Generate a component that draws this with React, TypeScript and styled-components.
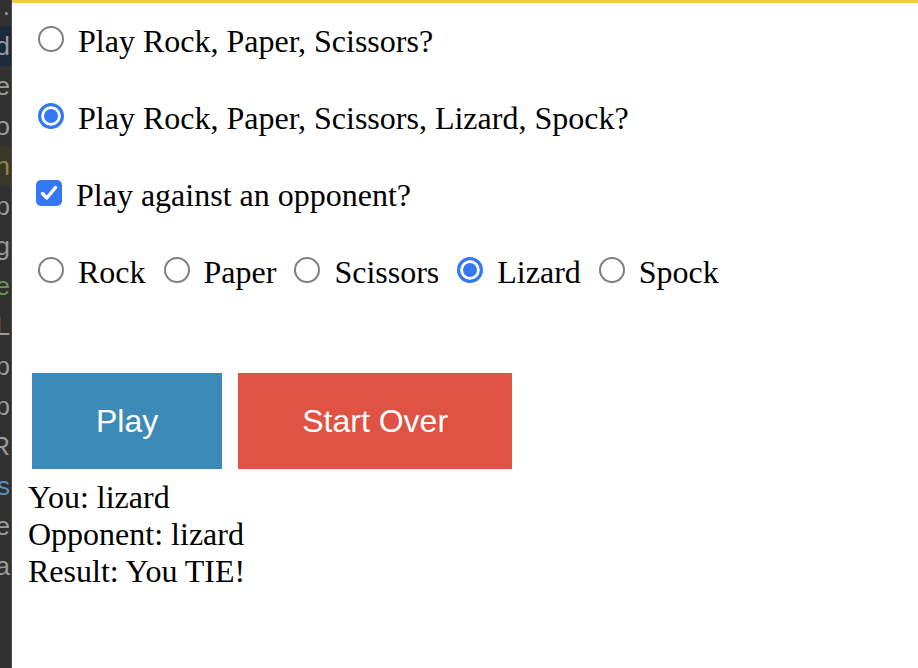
import React, { useState } from 'react';
import styled, { createGlobalStyle } from 'styled-components';

const GlobalStyle = createGlobalStyle`
  html, body { margin: 0; padding: 0; background: #ffffff; }
  body { font-family: "Liberation Serif", "Times New Roman", serif; }
`;

const Page = styled.div`
  display: flex;
  width: 918px;
  height: 668px;
  overflow: hidden;
`;

const EditorStrip = styled.aside`
  flex: 0 0 11px;
  background: #313131;
  border-right: 1px solid #4a4a4a;
  overflow: hidden;
  display: flex;
  flex-direction: column;
  font-family: "Liberation Sans", Arial, sans-serif;
  font-size: 26px;
  line-height: 40px;
  color: #9b9b9b;
`;

const StripLines = styled.div`
  margin-top: -14px;
  display: flex;
  flex-direction: column;
`;

const StripLine = styled.div<{ $band?: string; $tone?: string }>`
  height: 40px;
  display: flex;
  justify-content: flex-end;
  white-space: nowrap;
  padding-right: 1px;
  background: ${(p) => p.$band || 'transparent'};
  color: ${(p) => p.$tone || '#9b9b9b'};
`;

const Main = styled.main`
  flex: 1;
  border-top: 3px solid #f3c94a;
  padding: 17px 16px 0 16px;
  display: flex;
  flex-direction: column;
  background: #fff;
`;

const Options = styled.div`
  display: flex;
  flex-direction: column;
  gap: 37px;
`;

const OptionRow = styled.label`
  display: flex;
  align-items: flex-end;
  font-size: 32px;
  line-height: 37px;
  color: #000;
  cursor: default;
`;

const ChoiceRow = styled.div`
  display: flex;
  align-items: flex-end;
  gap: 8px;
  font-size: 32px;
  line-height: 37px;
  color: #000;
`;

const Choice = styled.label`
  display: flex;
  align-items: flex-end;
`;

const LabelText = styled.span`
  padding-left: 8px;
  white-space: nowrap;
`;

const Radio = styled.input.attrs({ type: 'radio' })`
  appearance: none;
  -webkit-appearance: none;
  flex: 0 0 auto;
  box-sizing: border-box;
  width: 26px;
  height: 26px;
  margin: 6px 6px 8px 10px;
  border-radius: 50%;
  border: 2px solid #7f7f7f;
  background: #fff;
  outline: none;
  &:checked {
    border: 3px solid #3478f6;
    background: #3478f6;
    box-shadow: inset 0 0 0 3px #fff;
  }
`;

const CheckBox = styled.span<{ $on: boolean }>`
  flex: 0 0 auto;
  box-sizing: border-box;
  width: 26px;
  height: 26px;
  margin: 6px 6px 8px 8px;
  border-radius: 5px;
  background: ${(p) => (p.$on ? '#3478f6' : '#fff')};
  border: ${(p) => (p.$on ? 'none' : '2px solid #7f7f7f')};
  display: flex;
  align-items: center;
  justify-content: center;
`;

const HiddenInput = styled.input`
  position: absolute;
  opacity: 0;
  width: 0;
  height: 0;
  margin: 0;
`;

const ButtonBar = styled.div`
  display: flex;
  gap: 16px;
  margin: 82px 0 10px 4px;
`;

const ActionButton = styled.button<{ $tone: string }>`
  box-sizing: border-box;
  height: 96px;
  padding: 0 64px;
  border: none;
  border-radius: 0;
  background: ${(p) => p.$tone};
  color: #fff;
  font-family: "Liberation Sans", Arial, Helvetica, sans-serif;
  font-size: 32px;
  display: flex;
  align-items: center;
  justify-content: center;
  cursor: pointer;
`;

const Results = styled.div`
  font-size: 32px;
  line-height: 37px;
  color: #000;
`;

const stripLines: { t: string; band?: string; tone?: string }[] = [
  { t: '.' },
  { t: 'd', band: '#1c2a3b' },
  { t: 'e' },
  { t: 'lo' },
  { t: 'n', band: '#38372a', tone: '#8e8a3c' },
  { t: 'p' },
  { t: '.g' },
  { t: 'e', tone: '#6a9650' },
  { t: 'L' },
  { t: 'p' },
  { t: 'p' },
  { t: 'R' },
  { t: 's', tone: '#5a8fc4' },
  { t: 'ce' },
  { t: 'ra' },
];

const moves = ['Rock', 'Paper', 'Scissors', 'Lizard', 'Spock'];

export default function App() {
  const [mode, setMode] = useState<'rps' | 'rpsls'>('rpsls');
  const [opponent, setOpponent] = useState(true);
  const [move, setMove] = useState('Lizard');

  return (
    <>
      <GlobalStyle />
      <Page>
        <EditorStrip aria-hidden="true">
          <StripLines>
            {stripLines.map((l, i) => (
              <StripLine key={i} $band={l.band} $tone={l.tone}>
                {l.t}
              </StripLine>
            ))}
          </StripLines>
        </EditorStrip>
        <Main>
          <Options>
            <OptionRow>
              <Radio name="mode" checked={mode === 'rps'} onChange={() => setMode('rps')} />
              <LabelText>Play Rock, Paper, Scissors?</LabelText>
            </OptionRow>
            <OptionRow>
              <Radio name="mode" checked={mode === 'rpsls'} onChange={() => setMode('rpsls')} />
              <LabelText>Play Rock, Paper, Scissors, Lizard, Spock?</LabelText>
            </OptionRow>
            <OptionRow>
              <HiddenInput type="checkbox" checked={opponent} onChange={() => setOpponent(!opponent)} />
              <CheckBox $on={opponent}>
                {opponent && (
                  <svg width="26" height="26" viewBox="0 0 26 26">
                    <polyline
                      points="6.5,13.5 10.8,18 19.5,7.5"
                      fill="none"
                      stroke="#fff"
                      strokeWidth="3.4"
                      strokeLinecap="round"
                      strokeLinejoin="round"
                    />
                  </svg>
                )}
              </CheckBox>
              <LabelText>Play against an opponent?</LabelText>
            </OptionRow>
            <ChoiceRow>
              {moves.map((m) => (
                <Choice key={m}>
                  <Radio name="move" checked={move === m} onChange={() => setMove(m)} />
                  <LabelText>{m}</LabelText>
                </Choice>
              ))}
            </ChoiceRow>
          </Options>
          <ButtonBar>
            <ActionButton $tone="#3c8ab7">Play</ActionButton>
            <ActionButton $tone="#e05243">Start Over</ActionButton>
          </ButtonBar>
          <Results>
            <div>You: lizard</div>
            <div>Opponent: lizard</div>
            <div>Result: You TIE!</div>
          </Results>
        </Main>
      </Page>
    </>
  );
}
